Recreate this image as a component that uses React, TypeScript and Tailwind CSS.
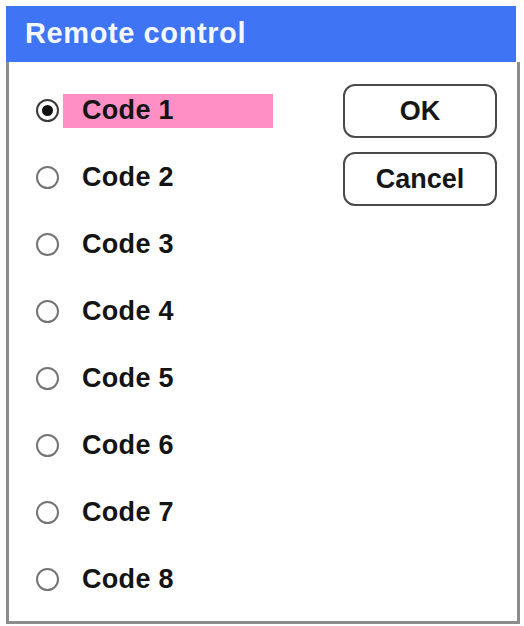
import { useState } from "react";

const codes = ["Code 1", "Code 2", "Code 3", "Code 4", "Code 5", "Code 6", "Code 7", "Code 8"];

function Radio({ checked }: { checked: boolean }) {
  return (
    <span
      className={
        "flex h-[23px] w-[23px] shrink-0 items-center justify-center rounded-full border-2 bg-white " +
        (checked ? "border-[#3a3a3a]" : "border-[#747474]")
      }
    >
      {checked ? <span className="h-[11px] w-[11px] rounded-full bg-[#111]" /> : null}
    </span>
  );
}

function DlgButton({ label }: { label: string }) {
  return (
    <button className="flex h-[54px] w-full items-center justify-center rounded-[12px] border-2 border-[#4a4a4a] bg-white text-[27px] font-bold text-[#161616]">
      {label}
    </button>
  );
}

export default function App() {
  const [sel, setSel] = useState(0);

  return (
    <div
      className="min-h-[626px] w-[524px] bg-white pl-[6px] pt-[6px]"
      style={{ fontFamily: '"Liberation Sans", Arial, sans-serif' }}
    >
      <div className="w-[514px]">
        <div className="flex h-[56px] w-[510px] items-center bg-[#3f74f5] pl-[19px] text-[29px] font-bold tracking-[0.6px] text-[#f2f8ff]">
          Remote control
        </div>
        <div className="flex h-[562px] border-x-[3px] border-b-[3px] border-[#8c8c8c] bg-white">
          <div className="flex flex-1 flex-col pl-[27px] pt-[15px]">
            {codes.map((c, i) => (
              <div
                key={c}
                className="flex h-[67px] cursor-pointer items-center"
                onClick={() => setSel(i)}
              >
                <Radio checked={sel === i} />
                <span
                  className={
                    "ml-[4px] flex h-[34px] w-[210px] items-center pl-[19px] text-[27px] font-bold tracking-[0.3px] text-[#141414] " +
                    (sel === i ? "bg-[#ff8fc5]" : "")
                  }
                >
                  {c}
                </span>
              </div>
            ))}
          </div>
          <div className="mr-[20px] flex w-[154px] flex-col gap-[14px] pt-[22px]">
            <DlgButton label="OK" />
            <DlgButton label="Cancel" />
          </div>
        </div>
      </div>
    </div>
  );
}
